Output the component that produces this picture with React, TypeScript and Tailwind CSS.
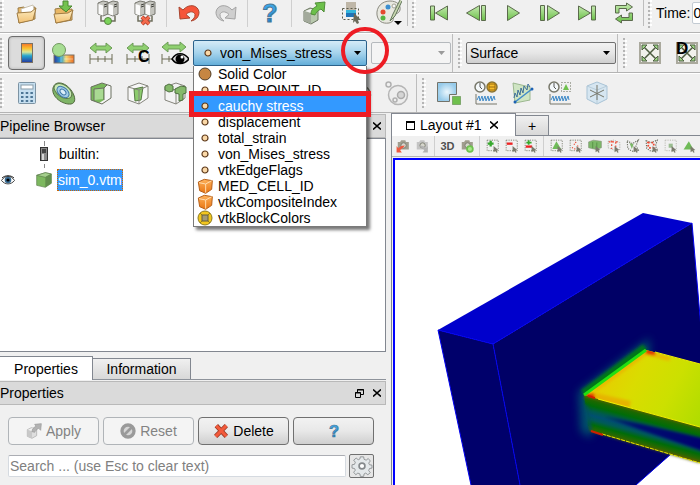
import { useState, type ReactNode } from 'react'

type IconProps = { children: ReactNode; size?: string }

function Icon({ children, size = 'h-6 w-6' }: IconProps) {
  return (
    <svg className={`${size} shrink-0 overflow-visible`} viewBox="0 0 24 24" fill="none" aria-hidden="true">
      {children}
    </svg>
  )
}

// Gradients shared by all the icons
function Defs() {
  return (
    <svg className="absolute h-0 w-0" aria-hidden="true">
      <defs>
        <linearGradient id="green" x1="0" y1="0" x2="0" y2="1">
          <stop offset="0" stopColor="#c5eab0" />
          <stop offset="1" stopColor="#6cc04a" />
        </linearGradient>
        <linearGradient id="folder" x1="0" y1="0" x2="0" y2="1">
          <stop offset="0" stopColor="#fdeec4" />
          <stop offset="1" stopColor="#f2c173" />
        </linearGradient>
        <linearGradient id="rainbow" x1="0" y1="0" x2="0" y2="1">
          <stop offset="0" stopColor="#f4742c" />
          <stop offset="0.25" stopColor="#fbc02d" />
          <stop offset="0.45" stopColor="#d8e89a" />
          <stop offset="0.65" stopColor="#23a4cf" />
          <stop offset="1" stopColor="#27369c" />
        </linearGradient>
        <linearGradient id="rainbowH" x1="0" y1="0" x2="1" y2="0">
          <stop offset="0" stopColor="#2b3b9e" />
          <stop offset="0.35" stopColor="#28a0d0" />
          <stop offset="0.6" stopColor="#f7d774" />
          <stop offset="1" stopColor="#ee6b1f" />
        </linearGradient>
        <radialGradient id="sky">
          <stop offset="0" stopColor="#eaf6fd" />
          <stop offset="1" stopColor="#97cbea" />
        </radialGradient>
        <linearGradient id="orange" x1="0" y1="0" x2="0" y2="1">
          <stop offset="0" stopColor="#ffb35c" />
          <stop offset="1" stopColor="#e87410" />
        </linearGradient>
        <linearGradient id="helpBlue" x1="0" y1="0" x2="0" y2="1">
          <stop offset="0" stopColor="#49b5f2" />
          <stop offset="1" stopColor="#1578c6" />
        </linearGradient>
      </defs>
    </svg>
  )
}

const OpenIcon = () => (
  <Icon>
    <path d="M3 7l6-1 2 2 9-2v12l-16 4z" fill="#e9b765" stroke="#9a7b45" />
    <path d="M6 8l12-4 2 9-13 4z" fill="#fff" stroke="#c9c2b0" />
    <path d="M2 12l14-1 5-4-3 12-14 3z" fill="url(#folder)" stroke="#a07c43" />
  </Icon>
)

const SaveIcon = () => (
  <Icon>
    <path d="M3 8l6-1 2 2 9-1v11l-16 3z" fill="#e9b765" stroke="#9a7b45" />
    <path d="M2 13l14-1 5-3-3 10-14 3z" fill="url(#folder)" stroke="#a07c43" />
    <path d="M11 0h5v5h4l-6 6-7-6h4z" fill="#74c24f" stroke="#4b8a31" />
  </Icon>
)

const Servers = () => (
  <>
    <path d="M2 2l5-2 5 1v12l-5 2-5-2z" fill="#c4c4be" stroke="#77776f" />
    <path d="M12 2l5-2 5 1v12l-5 2-5-2z" fill="#c4c4be" stroke="#77776f" />
    <path d="M2.500 3l4.500 1.500v10L2.500 13zM12.500 3l4.500 1.500v10L12.500 13z" fill="#fafafa" />
    <path d="M8 4l3-1M8 6l3-1M18 4l3-1M18 6l3-1" stroke="#3f3f3a" />
    <path d="M5 15v5h14v-5" stroke="#6e6e5c" strokeWidth="1.500" />
  </>
)

const ConnectIcon = () => (
  <Icon>
    <Servers />
    <circle cx="12" cy="20" r="3.500" fill="#7bd35a" stroke="#56843e" />
  </Icon>
)

const DisconnectIcon = () => (
  <Icon>
    <Servers />
    <path d="M9 16l7 7M16 16l-7 7" stroke="#a83a26" strokeWidth="4" />
    <path d="M9 16l7 7M16 16l-7 7" stroke="#f46a4c" strokeWidth="2.500" />
  </Icon>
)

const UndoArrow = ({ fill, stroke }: { fill: string; stroke: string }) => (
  <path
    d="M2 6l1 12 10-1-4-3.500c4-4 8-3 9 0 0 3-1 4-4 6.500 5-1 8-4 8-9C21 4 12 2 6 9z"
    fill={fill}
    stroke={stroke}
  />
)

const UndoIcon = () => (
  <Icon>
    <UndoArrow fill="#f5553a" stroke="#a8452f" />
  </Icon>
)

const RedoIcon = () => (
  <Icon>
    <g transform="matrix(-1 0 0 1 24 0)">
      <UndoArrow fill="#cfcfcf" stroke="#a3a3a3" />
    </g>
  </Icon>
)

const HelpIcon = ({ size = 'h-6 w-6' }: { size?: string }) => (
  <Icon size={size}>
    <text
      x="12"
      y="21"
      textAnchor="middle"
      fontFamily="Liberation Sans, sans-serif"
      fontWeight="bold"
      fontSize="25"
      fill="url(#helpBlue)"
      stroke="#4a7896"
      strokeWidth="1"
    >
      ?
    </text>
  </Icon>
)

const ApplyIcon = ({ size = 'h-6 w-6', muted = false }: { size?: string; muted?: boolean }) => (
  <Icon size={size}>
    <path d="M2 10l6-3 8 2v10l-7 4-7-3z" fill={muted ? '#dedede' : '#b9c9ae'} stroke={muted ? '#a6a6a6' : '#6a7560'} />
    <path d="M2 10l7 2v11l-7-3z" fill={muted ? '#c8c8c8' : '#a3aa9c'} />
    <path d="M3 10l6-2 6 1-6 3z" fill="#f3f3f3" />
    <path
      d="M9 13c0-4 2-6 6-8l-2-3 10-1-1 10-3-3c-4 2-5 4-6 6z"
      fill={muted ? '#b3b3b3' : '#6cc04a'}
      stroke={muted ? '#999' : '#4f8c38'}
    />
  </Icon>
)

const PickIcon = () => (
  <Icon>
    <rect x="7" y="1" width="10" height="8" fill="#bfb7a8" />
    <rect x="7" y="9" width="10" height="7" fill="#1f74b8" />
    <rect x="7" y="9" width="10" height="3" fill="#34b5dc" />
    <rect x="3.500" y="7.500" width="16" height="11" stroke="#5b5b4a" strokeDasharray="2 2" />
    <path d="M15 12l7 7-3 0 1 3-2 1-2-3-2 2z" fill="#6a6a5a" />
  </Icon>
)

const PaletteIcon = () => (
  <svg className="h-7 w-7 shrink-0" viewBox="0 0 28 28" fill="none" aria-hidden="true">
    <path d="M3 16C2 8 8 2 16 2c7 0 11 4 10 9-1 4-5 3-6 6s0 6-5 7C8 25 4 22 3 16z" fill="#e8e8e0" stroke="#8a8a80" />
    <circle cx="9" cy="13" r="2.500" fill="#e5482d" />
    <circle cx="14" cy="8" r="2.500" fill="#3b8fd0" />
    <circle cx="9" cy="19" r="2.500" fill="#56b33e" />
    <circle cx="20" cy="7" r="2" fill="#f5f5f5" stroke="#a3a395" />
    <path d="M26 1l-7 14-3 7 5-5 7-15" fill="#c8d6b0" stroke="#62765a" />
    <path d="M20 22h8l-4 4z" fill="#000" />
  </svg>
)

const G = '#5b6a4c'

const FirstIcon = () => (
  <Icon>
    <path d="M3.500 5h4v14h-4zM20.500 5v14l-12-7z" fill="url(#green)" stroke={G} />
  </Icon>
)
const PrevIcon = () => (
  <Icon>
    <path d="M15.500 4.500v15l-13-7.500zM17.500 4.500h4v15h-4z" fill="url(#green)" stroke={G} />
  </Icon>
)
const PlayIcon = () => (
  <Icon>
    <path d="M6.500 4.500v15l12-7.500z" fill="url(#green)" stroke={G} />
  </Icon>
)
const NextIcon = () => (
  <Icon>
    <path d="M2.500 4.500h4v15h-4zM9.500 4.500v15l12-7.500z" fill="url(#green)" stroke={G} />
  </Icon>
)
const LastIcon = () => (
  <Icon>
    <path d="M3.500 5v14l12-7zM16.500 5h4v14h-4z" fill="url(#green)" stroke={G} />
  </Icon>
)
const LoopIcon = () => (
  <Icon>
    <path
      d="M3.500 12V4.500h11V2l6 4-6 4V7.500h-7.500V12zM20.500 12v7.500h-11V22l-6-4 6-4v2.500h7.500V12z"
      fill="url(#green)"
      stroke={G}
    />
  </Icon>
)

const ColorBarIcon = () => (
  <Icon>
    <rect x="6.500" y="2.500" width="11" height="19" fill="url(#rainbow)" stroke="#7a7264" />
  </Icon>
)

const EditColorsIcon = () => (
  <Icon>
    <rect x="2" y="14" width="20" height="8" fill="url(#rainbowH)" stroke="#7a7264" />
    <path d="M9 15v6M12 18h9" stroke="#fff" strokeOpacity="0.4" />
    <circle cx="7" cy="9" r="6.500" fill="#a7dd93" stroke="#71975f" />
  </Icon>
)

const Rescale = () => (
  <>
    <path d="M1 7l6-5v3h10V2l6 5-6 5V9H7v3z" fill="#8fd070" stroke="#6b9a55" />
    <path d="M1 13v10M23 13v10M1 18h22M9 15v6M16 15v6" stroke="#6d6d55" />
  </>
)

const RescaleIcon = () => (
  <Icon>
    <Rescale />
  </Icon>
)

const RescaleCustomIcon = () => (
  <Icon>
    <Rescale />
    <text x="12" y="21" fontFamily="Liberation Sans, sans-serif" fontWeight="bold" fontSize="16" fill="#000">
      C
    </text>
  </Icon>
)

const RescaleVisibleIcon = () => (
  <svg className="h-6 w-7 shrink-0" viewBox="0 0 28 24" fill="none" aria-hidden="true">
    <path d="M1 6l6-5v3h12V1l6 5-6 5V8H7v3z" fill="#8fd070" stroke="#6b9a55" />
    <path d="M1 13v10M1 18h12M8 15v6" stroke="#6d6d55" />
    <path d="M11 18c4-7 12-7 17 0-5 6-13 6-17 0z" fill="#ddd" stroke="#000" strokeWidth="1.500" />
    <circle cx="19" cy="18" r="4.500" fill="#000" />
    <circle cx="21" cy="16" r="1.500" fill="#fff" />
  </svg>
)

const CalculatorIcon = () => (
  <Icon>
    <rect x="3.500" y="1.500" width="17" height="21" rx="1" fill="#c6dff0" stroke="#7c93a3" />
    <rect x="6" y="4" width="12" height="4" fill="#fff" stroke="#8a9da9" />
    <path d="M6 12h12M6 16h12M6 20h12" stroke="#4d7696" strokeWidth="2" strokeDasharray="2.500 2.200" />
  </Icon>
)

const ContourIcon = () => (
  <Icon>
    <path d="M1 7C3-1 13 1 19 9c5 7 5 13 0 14C11 24-1 16 1 7z" fill="#7fb567" stroke="#51683f" />
    <ellipse cx="11" cy="10" rx="10" ry="6" transform="rotate(35 11 10)" fill="#c9eab5" stroke="#5e7b4c" />
    <ellipse cx="11" cy="11" rx="7" ry="4.500" transform="rotate(40 11 11)" fill="#a2cbe8" stroke="#3f79a8" />
    <ellipse cx="11" cy="11" rx="3.500" ry="2.200" transform="rotate(45 11 11)" fill="#dceefa" stroke="#3f79a8" />
  </Icon>
)

const CUBE = 'M2 6l11-4 9 3v12l-9 6-11-4zM2 6l11 3 9-4M13 9v14'

const ClipIcon = () => (
  <Icon>
    <path d="M2 6l11-4 9 3v12l-9 6-11-4z" fill="#f5f5f5" />
    <path d="M2 6l11-4 5 2-3 3v12l-5 3-8-3z" fill="#79b95b" />
    <path d="M5 8l9-1v11l-9 1z" fill="#a9da92" />
    <path d="M2 6l11-4 9 3v12l-9 6-11-4zM5 8l10-1 3-3M5 8v12M15 7v12" stroke="#6b7060" />
  </Icon>
)

const SliceIcon = () => (
  <Icon>
    <path d="M2 6l11-4 9 3v12l-9 6-11-4z" fill="#f7f7f7" stroke="#85857c" />
    <path d="M8 8l9-2-2 13-6 1z" fill="#8dcc6e" stroke="#567c43" />
    <path d="M2 6l11 3 9-4M13 9v14" stroke="#85857c" />
  </Icon>
)

const ThresholdIcon = () => (
  <Icon>
    <path d={CUBE} fill="#f3f3f3" stroke="#85857c" />
    <path d="M2 5l4-2 4 2v5l-4 1-4-2zM12 8l6-3 5 1v6l-3 1v6l-4 1v-7l-4-1z" fill="#84b96a" stroke="#4f7040" />
  </Icon>
)

const GroupIcon = ({ dark = false }: { dark?: boolean }) => (
  <Icon>
    <circle cx="13" cy="14" r="9.500" fill="#ededed" stroke={dark ? '#777766' : '#b5b5b5'} strokeWidth="1.500" />
    <circle cx="3.500" cy="3.500" r="2.500" stroke="#b0b0b0" strokeWidth="1.500" />
    <circle cx="16" cy="14" r="3.500" fill="#d5d5d5" stroke="#aaa" strokeWidth="1.500" />
    <circle cx="10" cy="19" r="2" stroke="#b0b0b0" strokeWidth="1.500" />
  </Icon>
)

const Arrows4 = () => (
  <>
    <rect x="2" y="2" width="20" height="20" fill="#f1f1ec" stroke="#aaa99d" strokeWidth="2" />
    <path d="M6 6l12 12M18 6L6 18" stroke="#4d5c40" strokeWidth="1.500" />
    <path d="M4 4h5l-5 5zM20 4v5l-5-5zM4 20v-5l5 5zM20 20h-5l5-5z" fill="#9fd987" stroke="#4d5c40" />
  </>
)

const ResetCameraIcon = () => (
  <Icon>
    <Arrows4 />
  </Icon>
)

const ZoomToDataIcon = () => (
  <Icon>
    <Arrows4 />
    <text x="1" y="13" fontFamily="Liberation Sans, sans-serif" fontWeight="bold" fontSize="17" fill="#000">
      D
    </text>
  </Icon>
)

const ExtractIcon = () => (
  <Icon>
    <path d="M.5 1.500h19v12h-7v7H.5z" fill="url(#sky)" stroke="#73736a" />
    <rect x="15.500" y="15.500" width="8" height="8" fill="#6fc04d" stroke="#4d7a3a" strokeDasharray="1 1" />
  </Icon>
)

const Wave = () => (
  <>
    <path d="M2 13v10h21" stroke="#77776a" />
    <path d="M3 19l2-4 1 5 2-5 1 5 2-5 1 5 2-5 1 5 2-5 1 5 2-5 1 4" stroke="#3f8ac8" />
    <circle cx="6" cy="6" r="5" fill="#f4f8fa" stroke="#77776a" strokeWidth="1.500" />
    <path d="M6 2v4l2 2" stroke="#555" />
  </>
)

const PlotTimeIcon = () => (
  <Icon>
    <Wave />
    <circle cx="18" cy="6" r="5" fill="#f9bf2c" stroke="#8a7434" strokeWidth="1.500" />
    <path d="M15 3h6v6h-6zM15 6h6" stroke="#9a6d10" />
  </Icon>
)

const PlotLineIcon = () => (
  <Icon>
    <path d="M2 2l17 4v13l-15 3z" fill="#cfe5c3" stroke="#9cb890" />
    <path d="M3 17l1-5 2 4 1-7 2 5 1-7 2 5 1-7 3 4 1-6 2 3" stroke="#3e6f9a" />
    <path d="M4 21L21 8" stroke="#3f8ac8" strokeWidth="1.500" />
    <circle cx="4" cy="21" r="1.500" fill="#1d62b4" />
    <circle cx="21" cy="8" r="1.500" fill="#1d62b4" />
  </Icon>
)

const PlotSelectionIcon = () => (
  <Icon>
    <Wave />
    <rect x="13.500" y="1.500" width="9" height="9" stroke="#666a58" strokeDasharray="1 2" />
    <path d="M18 3l3 6h-6z" fill="#6fc04d" />
  </Icon>
)

const ProbeIcon = () => (
  <Icon>
    <path d="M12 1l10 4v13l-10 5-10-5V5z" fill="#d6e6f1" stroke="#a9c3d6" />
    <path d="M2 5l10 4 10-4M12 9v14" stroke="#b7ccd9" />
    <path d="M12 4v15M5 9l14 7M19 9L5 16" stroke="#77776a" />
  </Icon>
)

const CellIcon = () => (
  <Icon size="h-4 w-4">
    <path d="M2 6l9-4 12 2-1 13-9 6-9-4z" fill="url(#orange)" stroke="#b8611a" strokeWidth="1.500" />
    <path d="M3 7l10 2 9-5M13 9v13" stroke="#ffdcae" strokeWidth="1.500" />
  </Icon>
)

const PointIcon = () => (
  <svg className="h-2 w-2 shrink-0" viewBox="0 0 8 8" aria-hidden="true">
    <circle cx="4" cy="4" r="3" fill="#fbd9a8" stroke="#5e3a1c" strokeWidth="1.200" />
  </svg>
)

const SolidIcon = () => (
  <svg className="h-4 w-4 shrink-0" viewBox="0 0 16 16" aria-hidden="true">
    <circle cx="8" cy="8" r="6" fill="#c68642" stroke="#4f3d28" />
  </svg>
)

const BlockIcon = () => (
  <svg className="h-4 w-4 shrink-0" viewBox="0 0 16 16" aria-hidden="true">
    <circle cx="8" cy="8" r="7" fill="#f2c61e" stroke="#8d7a1e" />
    <rect x="5" y="5" width="6" height="6" fill="#a39b76" stroke="#655d3a" />
    <path d="M5 5L3 3M11 5l2-2M5 11l-2 2M11 11l2 2" stroke="#8d7a1e" />
  </svg>
)

const CloseIcon = () => (
  <svg className="h-2 w-2" viewBox="0 0 8 8" aria-hidden="true">
    <path d="M0 .5l8 7M8 .5l-8 7" stroke="#000" strokeWidth="1.600" />
  </svg>
)

function Grip() {
  return (
    <span className="mr-[4px] h-[30px] w-1 shrink-0 bg-[radial-gradient(circle_at_1px_1px,#b5b5b5_1px,transparent_1px),radial-gradient(circle_at_3px_3px,#fff_1px,transparent_1px)] bg-[length:4px_4px]" />
  )
}

const Divider = () => <span className="mx-[3px] h-7 w-px shrink-0 bg-[#cfcfcf]" />

function ToolButton({ label, pressed, children }: { label: string; pressed?: boolean; children: ReactNode }) {
  return (
    <button
      type="button"
      aria-label={label}
      aria-pressed={pressed}
      className={`flex h-[34px] w-[37px] shrink-0 items-center justify-center rounded-sm ${
        pressed ? 'border border-[#6d6d6d] bg-[#dcdcdc] shadow-[inset_0_0_3px_#aaa]' : ''
      }`}
    >
      {children}
    </button>
  )
}

const Row = ({ children }: { children: ReactNode }) => (
  <div className="flex h-10 items-stretch overflow-hidden border-t border-b border-t-white border-b-[#b4b4b4]">
    {children}
  </div>
)

const Group = ({ children, last }: { children: ReactNode; last?: boolean }) => (
  <div className={`flex shrink-0 items-center ${last ? '' : 'mr-px border-r border-[#bdbdbd] pr-px'}`}>{children}</div>
)

const arrays = [
  { name: 'Solid Color', icon: <SolidIcon /> },
  { name: 'MED_POINT_ID', icon: <PointIcon /> },
  { name: 'cauchy stress', icon: <PointIcon /> },
  { name: 'displacement', icon: <PointIcon /> },
  { name: 'total_strain', icon: <PointIcon /> },
  { name: 'von_Mises_stress', icon: <PointIcon /> },
  { name: 'vtkEdgeFlags', icon: <PointIcon /> },
  { name: 'MED_CELL_ID', icon: <CellIcon /> },
  { name: 'vtkCompositeIndex', icon: <CellIcon /> },
  { name: 'vtkBlockColors', icon: <BlockIcon /> },
]

const Caret = ({ muted }: { muted?: boolean }) => (
  <svg className="pointer-events-none absolute top-1/2 right-[6px] h-1 w-[7px] -translate-y-1/2" viewBox="0 0 7 4" aria-hidden="true">
    <path d="M0 0h7L3.500 4z" fill={muted ? '#9a9a9a' : '#000'} />
  </svg>
)

function ColorBy() {
  const [active, setActive] = useState('cauchy stress')

  return (
    <div className="relative z-20 w-[174px] shrink-0">
      <select
        aria-label="Color by"
        defaultValue="von_Mises_stress"
        className="block h-[26px] w-full appearance-none rounded-xs border border-[#2c628b] bg-linear-to-b from-[#d5ebf7] via-[#a5d3ec] to-[#63aed9] pl-[26px] text-black"
      >
        {arrays.map((a) => (
          <option key={a.name}>{a.name}</option>
        ))}
      </select>
      <span className="pointer-events-none absolute top-[9px] left-[11px]">
        <PointIcon />
      </span>
      <Caret />

      <ul
        role="listbox"
        aria-label="Arrays"
        className="absolute top-full left-0 w-full border border-t-0 border-[#7a7a7a] bg-white shadow-[3px_3px_3px_#00000088]"
      >
        {arrays.map((a) => {
          const selected = a.name === active
          return (
            <li
              key={a.name}
              role="option"
              aria-selected={selected}
              onMouseEnter={() => setActive(a.name)}
              className={`relative flex h-4 items-center leading-4 whitespace-nowrap ${
                selected ? 'bg-[#3399ff] text-white shadow-[0_-2px_#3399ff]' : ''
              }`}
            >
              <span className="flex w-[22px] shrink-0 justify-center">{a.icon}</span>
              <span className="pl-[2px]">{a.name}</span>
              {a.name === 'cauchy stress' && (
                <span className="pointer-events-none absolute -inset-x-[5px] -top-[7px] -bottom-[3px] z-10 border-[5px] border-[#ed1c24]" />
              )}
            </li>
          )
        })}
      </ul>
      <span className="pointer-events-none absolute -top-[13px] -right-[22px] h-[47px] w-12 rounded-full border-4 border-[#ed1c24]" />
    </div>
  )
}

function Toolbars() {
  return (
    <header className="relative z-10">
      <div className="flex h-[33px] items-stretch overflow-hidden border-b border-[#b4b4b4] pb-[6px]">
        <Group>
          <Grip />
          <ToolButton label="Open"><OpenIcon /></ToolButton>
          <ToolButton label="Save data"><SaveIcon /></ToolButton>
          <Divider />
          <ToolButton label="Connect"><ConnectIcon /></ToolButton>
          <ToolButton label="Disconnect"><DisconnectIcon /></ToolButton>
          <Divider />
          <ToolButton label="Undo"><UndoIcon /></ToolButton>
          <ToolButton label="Redo"><RedoIcon /></ToolButton>
          <Divider />
          <ToolButton label="Help"><HelpIcon /></ToolButton>
          <Divider />
          <ToolButton label="Apply changes automatically"><ApplyIcon /></ToolButton>
          <ToolButton label="Find data"><PickIcon /></ToolButton>
          <ToolButton label="Color palette"><PaletteIcon /></ToolButton>
        </Group>
        <Group>
          <span className="w-[3px]" />
          <Grip />
          <ToolButton label="First frame"><FirstIcon /></ToolButton>
          <ToolButton label="Previous frame"><PrevIcon /></ToolButton>
          <ToolButton label="Play"><PlayIcon /></ToolButton>
          <ToolButton label="Next frame"><NextIcon /></ToolButton>
          <ToolButton label="Last frame"><LastIcon /></ToolButton>
          <ToolButton label="Loop"><LoopIcon /></ToolButton>
        </Group>
        <Group last>
          <span className="w-[3px]" />
          <Grip />
          <label htmlFor="time">Time:</label>
          <input id="time" defaultValue="0" className="ml-[2px] h-[22px] w-24 rounded-xs border border-[#c3cbd3] bg-white" />
        </Group>
      </div>

      <div className="flex h-10 items-stretch border-t border-b border-t-white border-b-[#b4b4b4]">
        <Group>
          <Grip />
          <ToolButton label="Show color legend" pressed><ColorBarIcon /></ToolButton>
          <ToolButton label="Edit color map"><EditColorsIcon /></ToolButton>
          <ToolButton label="Rescale to data range"><RescaleIcon /></ToolButton>
          <ToolButton label="Rescale to custom range"><RescaleCustomIcon /></ToolButton>
          <ToolButton label="Rescale to visible range"><RescaleVisibleIcon /></ToolButton>
          <ColorBy />
          <div className="relative ml-1 w-20">
            <select aria-label="Component" disabled className="block h-[22px] w-full appearance-none rounded-xs border border-[#b5b9bd] bg-[#f4f4f4]" />
            <Caret muted />
          </div>
        </Group>
        <Group>
          <span className="w-1" />
          <Grip />
          <div className="relative w-[150px]">
            <select
              aria-label="Representation"
              className="block h-[22px] w-full appearance-none rounded-xs border border-[#707070] bg-linear-to-b from-[#f2f2f2] via-[#e6e6e6] to-[#cfcfcf] pl-[3px] text-black"
            >
              <option>Surface</option>
            </select>
            <Caret />
          </div>
        </Group>
        <div className="flex min-w-0 flex-1 items-center overflow-hidden">
          <span className="w-1 shrink-0" />
          <Grip />
          <ToolButton label="Reset camera"><ResetCameraIcon /></ToolButton>
          <ToolButton label="Zoom to data"><ZoomToDataIcon /></ToolButton>
        </div>
      </div>

      <div className="relative -z-10">
        <Row>
          <Group>
            <Grip />
            <ToolButton label="Calculator"><CalculatorIcon /></ToolButton>
            <ToolButton label="Contour"><ContourIcon /></ToolButton>
            <ToolButton label="Clip"><ClipIcon /></ToolButton>
            <ToolButton label="Slice"><SliceIcon /></ToolButton>
            <ToolButton label="Threshold"><ThresholdIcon /></ToolButton>
            <div className="flex w-[185px] justify-end">
              <ToolButton label="Group datasets"><GroupIcon dark /></ToolButton>
            </div>
            <ToolButton label="Extract level"><GroupIcon /></ToolButton>
          </Group>
          <Group last>
            <span className="w-1" />
            <Grip />
            <ToolButton label="Extract selection"><ExtractIcon /></ToolButton>
            <ToolButton label="Plot data over time"><PlotTimeIcon /></ToolButton>
            <ToolButton label="Plot over line"><PlotLineIcon /></ToolButton>
            <ToolButton label="Plot selection over time"><PlotSelectionIcon /></ToolButton>
            <ToolButton label="Probe"><ProbeIcon /></ToolButton>
          </Group>
        </Row>
      </div>
    </header>
  )
}

function DockTitle({ title }: { title: string }) {
  return (
    <div className="flex h-6 items-center justify-between border border-l-0 border-[#b9b9b9] bg-[#dadada] pr-1">
      <h2>{title}</h2>
      <div className="flex items-center gap-[9px]">
        <button type="button" aria-label={`Float ${title}`}>
          <svg className="h-[9px] w-[9px]" viewBox="0 0 9 9" fill="none" aria-hidden="true">
            <path d="M2.500 3V.5h6v5H6M2 1h7" stroke="#000" />
            <path d="M.5 3.500h5v5h-5zM0 4h6" stroke="#000" />
          </svg>
        </button>
        <button type="button" aria-label={`Close ${title}`}>
          <CloseIcon />
        </button>
      </div>
    </div>
  )
}

function PipelineBrowser() {
  return (
    <section>
      <DockTitle title="Pipeline Browser" />
      <ul className="h-[214px] border border-l-0 border-[#828790] bg-white">
        <li className="flex h-[30px] items-center pl-[36px]">
          <span className="flex w-4 flex-col items-center">
            <span className="mb-px h-[5px] w-px bg-[#8a8a8a]" />
            <svg className="h-[14px] w-2" viewBox="0 0 8 14" aria-hidden="true">
              <rect x=".5" y=".5" width="7" height="13" fill="#8b8b8b" stroke="#333" />
              <path d="M2 3h4M2 5h4" stroke="#000" />
              <path d="M2 7h2v6H2z" fill="#d8d8d8" />
            </svg>
            <span className="mt-[3px] h-[4px] w-px bg-[#8a8a8a]" />
          </span>
          <span className="pl-[7px]">builtin:</span>
        </li>
        <li className="flex h-[22px] items-center">
          <button type="button" aria-label="Toggle visibility" className="ml-px">
            <svg className="h-3 w-[14px]" viewBox="0 0 14 12" aria-hidden="true">
              <path d="M.5 6.500C4 1 10 1 13.500 6.500 10 11 4 11 .5 6.500z" fill="#fff" stroke="#444" />
              <circle cx="7" cy="6" r="3.300" fill="#3a6c93" />
              <circle cx="7" cy="6" r="1.600" fill="#000" />
              <path d="M1 4C4 1 10 1 13 4" fill="none" stroke="#222" />
            </svg>
          </button>
          <span className="ml-[21px]">
            <Icon size="h-4 w-4">
              <path d="M1 5l13-4 9 2v14l-9 6-13-3z" fill="#7db85f" stroke="#5e7d4d" />
              <path d="M1 5l13 3 9-5-9-2z" fill="#a4cf8c" stroke="#5e7d4d" />
              <path d="M14 8l9-5v14l-9 6z" fill="#628f4d" />
            </Icon>
          </span>
          <span className="ml-[5px] border border-dotted border-[#cc6600] bg-[#3399ff] leading-5 text-white">
            sim_0.vtm
          </span>
        </li>
      </ul>
    </section>
  )
}

const pushButton =
  'flex h-7 items-center justify-center gap-1 rounded-sm border border-[#707070] bg-linear-to-b from-[#f2f2f2] via-[#e8e8e8] to-[#cfcfcf] disabled:border-[#b0b4b8] disabled:bg-none disabled:bg-[#f4f4f4] disabled:text-[#838383]'

function PropertiesPanel() {
  return (
    <section className="mt-1">
      <div role="tablist" className="flex h-6 items-end border-b border-[#8e939b]">
        <button type="button" role="tab" aria-selected="true" className="-mb-px h-6 w-[93px] border border-b-0 border-l-0 border-[#828790] bg-white">
          Properties
        </button>
        <button type="button" role="tab" aria-selected="false" className="h-[21px] w-[98px] border border-b-0 border-l-0 border-[#828790] bg-linear-to-b from-[#f0f0f0] to-[#d8d8d8]">
          Information
        </button>
      </div>
      <div className="pt-px">
        <DockTitle title="Properties" />
      </div>
      <div className="flex flex-col gap-[9px] py-3 pr-3 pl-2">
        <div className="grid grid-cols-[1fr_1fr_1fr_81px] gap-1">
          <button type="button" disabled className={pushButton}>
            <ApplyIcon size="h-4 w-4" muted /> Apply
          </button>
          <button type="button" disabled className={pushButton}>
            <Icon size="h-4 w-4">
              <circle cx="12" cy="12" r="9" stroke="#9a9a9a" strokeWidth="5" fill="#d6d6d6" />
              <path d="M6 18L18 6" stroke="#9a9a9a" strokeWidth="4" />
            </Icon>
            Reset
          </button>
          <button type="button" className={pushButton}>
            <Icon size="h-4 w-4">
              <path d="M5 4l15 16M20 4L4 20" stroke="#9c3c28" strokeWidth="7" />
              <path d="M5 4l15 16M20 4L4 20" stroke="#f35a3b" strokeWidth="4.500" />
            </Icon>
            Delete
          </button>
          <button type="button" aria-label="Help" className={pushButton}>
            <HelpIcon size="h-4 w-4" />
          </button>
        </div>
        <div className="flex items-center gap-[3px]">
          <input
            type="search"
            aria-label="Search properties"
            placeholder="Search ... (use Esc to clear text)"
            className="h-[22px] min-w-0 flex-1 rounded-xs border border-[#d5dae0] border-t-[#abadb3] bg-white px-px placeholder:text-[#808080]"
          />
          <button type="button" aria-label="Advanced properties" className="flex h-6 w-[25px] items-center justify-center rounded-xs border border-[#707070] bg-[#e6e6e6]">
            <Icon size="h-5 w-5">
              <path
                d="M10 1h4l.5 3 2.500 1 2.500-2 2.500 3-2 2.500 1 2 3 .5v3.500l-3 .5-1 2.500 2 2.500-3 2.500-2.500-2-2 1-.5 3h-4l-.5-3-2.500-1-2.500 2-2.500-3 2-2.500-1-2-3-.5V10.500l3-.5 1-2.500-2-2.500 3-2.500 2.500 2 2-1z"
                fill="#e4e8ea"
                stroke="#85898c"
              />
              <circle cx="12" cy="12" r="3.500" fill="#fff" stroke="#85898c" strokeWidth="2" />
            </Icon>
          </button>
        </div>
      </div>
    </section>
  )
}

const Pointer = () => <path d="M13 12l8 7-3 .5 2 3-2 1-2-3-3 2z" fill="#7a7a6d" />

function SmallButton({ label, children }: { label: string; children: ReactNode }) {
  return (
    <button type="button" aria-label={label} className="flex h-5 w-[19px] shrink-0 items-center justify-center">
      <Icon size="h-[14px] w-[14px]">{children}</Icon>
    </button>
  )
}

const Dashed = ({ color = '#77796c' }: { color?: string }) => (
  <rect x="2" y="2" width="19" height="18" stroke={color} strokeWidth="1.500" strokeDasharray="2 2" />
)

const CameraBody = ({ color }: { color: string }) => (
  <>
    <path d="M3 5h4l2-3h7l1 3h5v13H3z" fill={color} />
    <circle cx="13" cy="11" r="4.500" fill="#d6d6cc" stroke="#77796c" strokeWidth="1.500" />
  </>
)

function ViewToolbar() {
  return (
    <div className="flex h-[21px] shrink-0 items-center overflow-hidden border-b border-[#b4b4b4] pl-px">
      <SmallButton label="Undo camera">
        <CameraBody color="#a09d8e" />
        <path d="M1 12v11h9l-3-4c3-3 6-4 8-8-4 0-8 1-11 5z" fill="#ee5a40" />
      </SmallButton>
      <SmallButton label="Redo camera">
        <CameraBody color="#c4c4c4" />
        <path d="M22 12v11h-9l3-4c-3-3-6-4-8-8 4 0 8 1 11 5z" fill="#b3b3b3" />
      </SmallButton>
      <Divider />
      <button type="button" className="w-[19px] shrink-0 text-[11px] leading-5 font-bold text-[#505050]">
        3D
      </button>
      <SmallButton label="Adjust camera">
        <CameraBody color="#a09d8e" />
        <circle cx="17" cy="17" r="5" fill="#a8e888" stroke="#6ec24e" strokeWidth="3" />
      </SmallButton>
      <Divider />
      <SmallButton label="Add to selection">
        <Dashed />
        <path d="M8 3v10M3 8h10" stroke="#36a82c" strokeWidth="4" />
        <Pointer />
      </SmallButton>
      <SmallButton label="Subtract from selection">
        <Dashed />
        <path d="M3 8h10" stroke="#ee2222" strokeWidth="4" />
        <Pointer />
      </SmallButton>
      <SmallButton label="Toggle selection">
        <Dashed />
        <path d="M8 2v8M4 6h9" stroke="#36a82c" strokeWidth="3" />
        <path d="M3 13h11" stroke="#ee2222" strokeWidth="4" />
        <Pointer />
      </SmallButton>
      <Divider />
      <SmallButton label="Select cells">
        <Dashed />
        <path d="M11 4l8 13H4z" fill="#6fbb58" />
        <Pointer />
      </SmallButton>
      <SmallButton label="Select points">
        <Dashed />
        <path d="M11 5l7 12H5z" stroke="#ee4a33" strokeWidth="2" strokeDasharray="2 5" />
        <Pointer />
      </SmallButton>
      <SmallButton label="Select cells through">
        <path d="M1 5l8-3 14 2v11l-9 3-13-3z" fill="#7cb868" stroke="#84907b" />
        <path d="M8 5v11M15 6v10" stroke="#5e9a4d" strokeWidth="2" />
        <Pointer />
      </SmallButton>
      <SmallButton label="Select points through">
        <path d="M2 4l9-2 11 4v12l-10 1-10-4z" stroke="#a4a49b" strokeWidth="1.500" strokeDasharray="2 2" />
        <path d="M8 3v14M15 5v12M3 5h18" stroke="#ee4a33" strokeWidth="2" strokeDasharray="3 3" />
        <Pointer />
      </SmallButton>
      <SmallButton label="Select cells with polygon">
        <path d="M2 3l9 5 10-6-4 10 5 8-12 1-7-5z" stroke="#6b6e60" strokeWidth="2" strokeDasharray="2 2" />
        <path d="M6 7l7 2-3 8z" fill="#7cb868" />
        <Pointer />
      </SmallButton>
      <SmallButton label="Select points with polygon">
        <path d="M2 3l9 3 10-4-3 10 4 8-12 1-7-5z" stroke="#6b6e60" strokeWidth="2" strokeDasharray="2 2" />
        <path d="M5 6h10v9H6z" stroke="#ee4a33" strokeWidth="3" strokeDasharray="3 3" />
        <Pointer />
      </SmallButton>
      <SmallButton label="Select block">
        <Dashed color="#b4b4ac" />
        <rect x="8" y="8" width="7" height="7" fill="#9bbd90" />
        <Pointer />
      </SmallButton>
      <SmallButton label="Interactive select">
        <path d="M10 4l8 14H1z" fill="#6fbb58" />
        <Pointer />
      </SmallButton>
    </div>
  )
}

// Von Mises stress on a cantilever beam fixed to a block
function RenderView() {
  return (
    <div className="relative min-h-[300px] flex-1 overflow-hidden border-2 border-r-0 border-b-0 border-[#0000ff] bg-white">
      <svg className="absolute inset-0 h-full w-full" viewBox="395 160 305 325" preserveAspectRatio="xMinYMin slice" fill="none" role="img" aria-label="Stress field">
        <defs>
          <linearGradient id="side" gradientUnits="userSpaceOnUse" x1="584" y1="395" x2="575" y2="428">
            <stop offset="0" stopColor="#5a6400" />
            <stop offset="0.1" stopColor="#1c6800" />
            <stop offset="0.25" stopColor="#006c08" />
            <stop offset="0.4" stopColor="#005a50" />
            <stop offset="0.52" stopColor="#005070" />
            <stop offset="0.64" stopColor="#005a58" />
            <stop offset="0.78" stopColor="#006c08" />
            <stop offset="0.92" stopColor="#2c6800" />
            <stop offset="1" stopColor="#5c5c00" />
          </linearGradient>
          <linearGradient id="core" gradientUnits="userSpaceOnUse" x1="600" y1="416" x2="700" y2="443">
            <stop offset="0" stopColor="#000070" stopOpacity="0" />
            <stop offset="0.4" stopColor="#000070" stopOpacity="0.8" />
            <stop offset="1" stopColor="#000070" />
          </linearGradient>
          <linearGradient id="top" gradientUnits="userSpaceOnUse" x1="612" y1="372" x2="702" y2="420">
            <stop offset="0" stopColor="#e4d000" />
            <stop offset="0.25" stopColor="#dadc00" />
            <stop offset="0.6" stopColor="#cce000" />
            <stop offset="1" stopColor="#b0dc00" />
          </linearGradient>
          <filter id="glow" filterUnits="userSpaceOnUse" x="540" y="310" width="160" height="170">
            <feGaussianBlur stdDeviation="4" />
          </filter>
          <filter id="soft" filterUnits="userSpaceOnUse" x="540" y="310" width="170" height="170">
            <feGaussianBlur stdDeviation="1.500" />
          </filter>
          <clipPath id="topClip">
            <path d="M584 395l62-45 54 14v63z" />
          </clipPath>
          <clipPath id="sideClip">
            <path d="M584 395l116 32v36l-110-32z" />
          </clipPath>
        </defs>
        <path d="M438 330l55 14 27 141h-49z" fill="#00006b" />
        <path d="M493 344l199-121 9 105v100l-65 57H520z" fill="#000066" />
        <path d="M438 330l205-117 49 10-199 121z" fill="#0000cc" />
        <path d="M471 485l-33-155 55 14 27 141M493 344l199-121 9 105M636 485l64-57" stroke="#0000f0" />

        <path d="M581 393l66-50v14l-50 60-8 17-6-4z" fill="#006868" stroke="#006070" strokeWidth="5" filter="url(#glow)" opacity="0.8" />
        <path d="M583 393l62-46" stroke="#007818" strokeWidth="7" filter="url(#soft)" />
        <path d="M584 395l116 32v36l-110-32z" fill="url(#side)" filter="url(#soft)" />
        <g clipPath="url(#sideClip)">
          <path d="M584 395l120 33v36l-114-32z" fill="url(#side)" />
          <path d="M606 417l100 23v11z" fill="url(#core)" stroke="url(#core)" strokeWidth="2" filter="url(#soft)" />
          <path d="M585 405l5 26" stroke="#005060" strokeWidth="5" filter="url(#soft)" opacity="0.8" />
        </g>
        <path d="M584 395l62-45 54 14v63z" fill="url(#top)" />
        <g clipPath="url(#topClip)">
          <path d="M595 390l51-37 24 6" stroke="#e8b800" strokeWidth="4" filter="url(#soft)" />
          <path d="M590 396l40 9" stroke="#e6b400" strokeWidth="8" filter="url(#soft)" />
          <path d="M585 396h9M646 351l9 2" stroke="#e02000" strokeWidth="4" filter="url(#soft)" />
        </g>
        <path d="M584 395l62-45" stroke="#20e010" strokeWidth="3" />
        <path d="M598 399l102 28M655 352l45 12" stroke="#f0f000" />
        <path d="M602 434l98 29" stroke="#e8e800" strokeDasharray="4 1" />
        <path d="M591 431l12 4M588 396l7 2" stroke="#d02000" strokeWidth="2" />
      </svg>
    </div>
  )
}

export default function App() {
  return (
    <div className="flex h-screen min-h-[485px] flex-col overflow-hidden bg-[#f0f0f0] font-['Liberation_Sans',Arial,sans-serif] text-[14px] leading-4 text-black">
      <Defs />
      <Toolbars />
      <main className="flex min-h-0 flex-1">
        <aside className="w-[386px] shrink-0 pt-px">
          <PipelineBrowser />
          <PropertiesPanel />
        </aside>
        <section className="ml-[5px] flex min-w-0 flex-1 flex-col border-l border-[#828790]">
          <div role="tablist" className="flex h-[23px] shrink-0 items-end border-b border-[#828790]">
            <button
              type="button"
              role="tab"
              aria-selected="true"
              className="-mb-px flex h-[23px] w-[124px] items-center border-t border-r border-[#828790] bg-white pl-[14px]"
            >
              <span className="mr-[5px] h-[9px] w-[9px] border border-t-2 border-black" />
              <span className="mr-2 whitespace-nowrap">Layout #1</span>
              <CloseIcon />
            </button>
            <button
              type="button"
              role="tab"
              aria-selected="false"
              aria-label="New layout"
              className="h-5 w-[33px] border-t border-r border-[#828790] bg-linear-to-b from-[#f0f0f0] to-[#d8d8d8]"
            >
              +
            </button>
          </div>
          <ViewToolbar />
          <div className="flex flex-1 flex-col pt-px pl-px">
            <RenderView />
          </div>
        </section>
      </main>
    </div>
  )
}
